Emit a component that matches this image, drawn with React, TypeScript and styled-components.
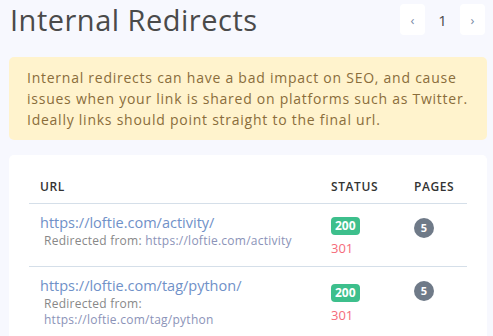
import React from 'react';
import styled, {createGlobalStyle} from "styled-components";

const GlobalStyle = createGlobalStyle`
  body {
    margin: 0;
    background: #f7f8fe;
    font-family: "Open Sans", "Liberation Sans", sans-serif;
  }
`

type Redirect = {
    url: string
    from: string
    status: number
    code: number
    pages: number
}

const redirects: Redirect[] = [
    {url: 'https://loftie.com/activity/', from: 'https://loftie.com/activity', status: 200, code: 301, pages: 5},
    {url: 'https://loftie.com/tag/python/', from: 'https://loftie.com/tag/python', status: 200, code: 301, pages: 5},
]

export default function App() {
    return (
        <Page>
            <GlobalStyle/>
            <Header>
                <Title>Internal Redirects</Title>
                <Pager>
                    <PageButton>‹</PageButton>
                    <PageNumber>1</PageNumber>
                    <PageButton>›</PageButton>
                </Pager>
            </Header>

            <Alert>
                Internal redirects can have a bad impact on SEO, and cause issues when your link is shared on
                platforms such as Twitter. Ideally links should point straight to the final url.
            </Alert>

            <Card>
                <Table>
                    <thead>
                    <tr>
                        <Th>URL</Th>
                        <Th>Status</Th>
                        <Th>Pages</Th>
                    </tr>
                    </thead>
                    <tbody>
                    {redirects.map(r => (
                        <tr key={r.url}>
                            <UrlCell>
                                <Link>{r.url}</Link>
                                <From>Redirected from: <FromLink>{r.from}</FromLink></From>
                            </UrlCell>
                            <StatusCell>
                                <Badge>{r.status}</Badge>
                                <Code>{r.code}</Code>
                            </StatusCell>
                            <PagesCell>
                                <Count>{r.pages}</Count>
                            </PagesCell>
                        </tr>
                    ))}
                    </tbody>
                </Table>
            </Card>
        </Page>
    );
}

const Page = styled.div`
  padding: 0 6px 0 9px;
`

const Header = styled.div`
  display: flex;
  justify-content: space-between;
  align-items: flex-start;
  padding: 3px 2px 0 1px;
  height: 57px;
  box-sizing: border-box;
`

const Title = styled.h1`
  margin: 0;
  font-size: 29px;
  font-weight: 400;
  letter-spacing: 0.5px;
  line-height: 34px;
  color: #4a4a4a;
`

const Pager = styled.div`
  display: flex;
  align-items: center;
  gap: 10px;
  padding-top: 1px;
`

const PageButton = styled.span`
  display: flex;
  align-items: center;
  justify-content: center;
  width: 25px;
  height: 31px;
  background: #fff;
  border-radius: 4px;
  color: #7a8aa6;
  font-size: 13px;
`

const PageNumber = styled.span`
  width: 15px;
  text-align: center;
  font-size: 15px;
  color: #4a4a4a;
`

const Alert = styled.div`
  background: #fff3cd;
  border-radius: 5px;
  padding: 10px 18px 10px 18px;
  font-size: 14px;
  letter-spacing: 0.75px;
  line-height: 21px;
  color: #8a6d3b;
`

const Card = styled.div`
  margin-top: 15px;
  background: #fff;
  border-radius: 5px;
  padding: 11px 20px 20px 20px;
`

const Table = styled.table`
  width: 100%;
  border-collapse: collapse;
`

const Th = styled.th`
  text-align: left;
  text-transform: uppercase;
  font-size: 12px;
  font-weight: 600;
  letter-spacing: 0.6px;
  color: #333;
  padding: 12px 11px 8px 11px;
  border-bottom: 1px solid #d5dfe9;

  &:nth-child(2) {
    width: 61px;
  }

  &:nth-child(3) {
    width: 42px;
  }
`

const Td = styled.td`
  padding: 9px 11px;
  border-bottom: 1px solid #d5dfe9;
`

const UrlCell = styled(Td)`
  vertical-align: top;
`

const StatusCell = styled(Td)`
  vertical-align: middle;
`

const PagesCell = styled(Td)`
  vertical-align: top;
  padding-top: 11px;
`

const Link = styled.a`
  display: block;
  font-size: 14.5px;
  line-height: 20px;
  color: #7091c8;
`

const From = styled.div`
  max-width: 262px;
  padding-left: 4px;
  font-size: 12px;
  letter-spacing: 0.25px;
  line-height: 16px;
  color: #888;
`

const FromLink = styled.span`
  color: #8b93b8;
`

const Badge = styled.span`
  display: inline-block;
  background: #3dbf8c;
  color: #fff;
  font-size: 12px;
  font-weight: 700;
  line-height: 18px;
  padding: 0 4px;
  border-radius: 4px;
`

const Code = styled.div`
  margin-top: 4px;
  font-size: 13px;
  line-height: 18px;
  color: #f56b7a;
`

const Count = styled.span`
  display: inline-flex;
  align-items: center;
  justify-content: center;
  width: 20px;
  height: 20px;
  border-radius: 50%;
  background: #6f7a88;
  color: #fff;
  font-size: 11px;
  font-weight: 700;
`
